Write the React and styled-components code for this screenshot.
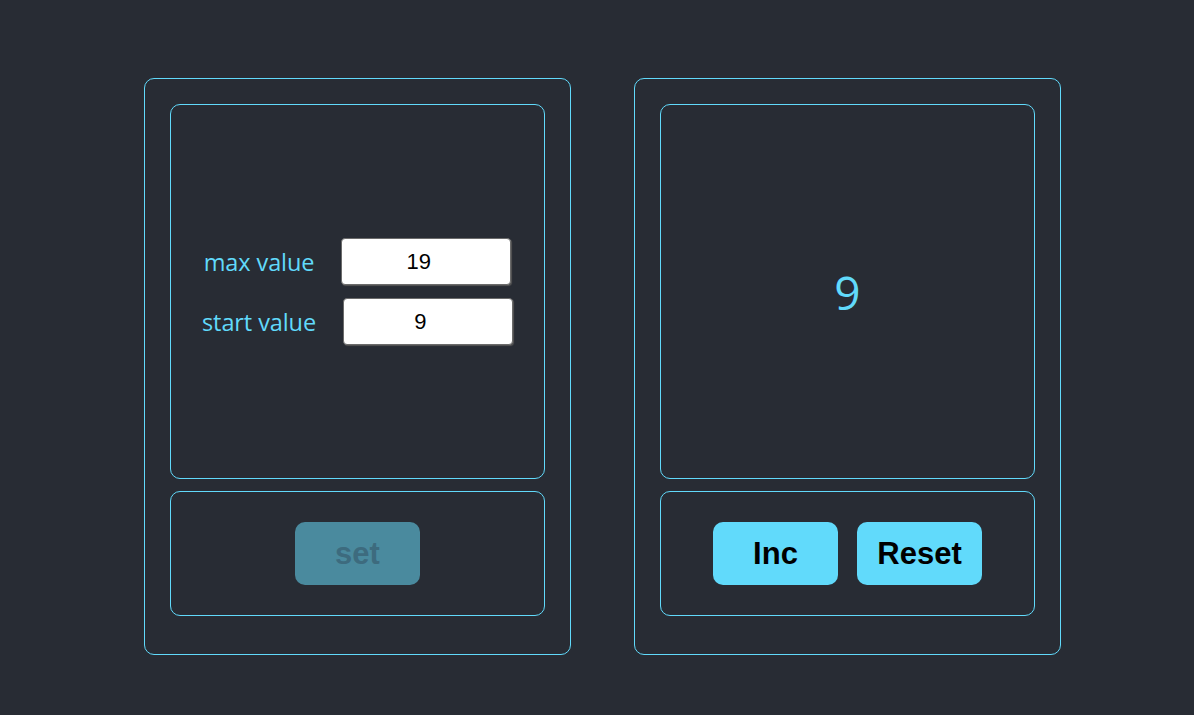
import React from "react";
import styled, { createGlobalStyle } from "styled-components";

const Global = createGlobalStyle`
  html, body { margin: 0; padding: 0; background: #282c34; }
  body { font-family: "Open Sans", "Noto Sans", sans-serif; }
`;

const Page = styled.div`
  min-height: 715px;
  box-sizing: border-box;
  padding: 78px 0 0 144px;
  display: flex;
  gap: 63px;
  align-items: flex-start;
`;

const Card = styled.div`
  box-sizing: border-box;
  width: 427px;
  height: 577px;
  border: 1px solid #61dafb;
  border-radius: 10px;
  padding: 25px;
  display: flex;
  flex-direction: column;
  gap: 12px;
`;

const Panel = styled.div`
  box-sizing: border-box;
  width: 375px;
  height: ${(p) => p.$h}px;
  border: 1px solid #61dafb;
  border-radius: 10px;
  display: flex;
  flex-direction: ${(p) => (p.$column ? "column" : "row")};
  align-items: center;
  justify-content: center;
  gap: ${(p) => p.$gap || 0}px;
`;

const Row = styled.label`
  display: flex;
  align-items: center;
  gap: 27px;
`;

const Label = styled.span`
  color: #61dafb;
  font-family: "Open Sans", "Noto Sans", sans-serif;
  font-size: 23.5px;
  letter-spacing: -0.1px;
`;

const Input = styled.input`
  box-sizing: border-box;
  width: 170px;
  height: 47px;
  border: 1px solid #6b6b6b;
  border-radius: 4px;
  box-shadow: 1px 1px 1px 0 #555;
  background: #fff;
  color: #000;
  font-family: "Liberation Sans", Arial, sans-serif;
  font-size: 22px;
  text-align: center;
  outline: none;
  padding: 0;
`;

const Counter = styled.div`
  color: #61dafb;
  font-family: "Open Sans", "Noto Sans", sans-serif;
  font-size: 46px;
  line-height: 1;
`;

const Button = styled.button`
  box-sizing: border-box;
  width: 125px;
  height: 63px;
  border: none;
  border-radius: 10px;
  background: ${(p) => (p.disabled ? "#4a8a9e" : "#61dafb")};
  color: ${(p) => (p.disabled ? "#3d6b7e" : "#000")};
  font-family: "Liberation Sans", Arial, sans-serif;
  font-weight: bold;
  font-size: 31px;
  cursor: ${(p) => (p.disabled ? "default" : "pointer")};
  padding: 0;
`;

export default function App() {
  return (
    <>
      <Global />
      <Page>
        <Card>
          <Panel $h={375} $column $gap={13}>
            <Row>
              <Label>max value</Label>
              <Input type="number" defaultValue={19} />
            </Row>
            <Row>
              <Label>start value</Label>
              <Input type="number" defaultValue={9} />
            </Row>
          </Panel>
          <Panel $h={125}>
            <Button disabled>set</Button>
          </Panel>
        </Card>
        <Card>
          <Panel $h={375}>
            <Counter>9</Counter>
          </Panel>
          <Panel $h={125} $gap={19}>
            <Button>Inc</Button>
            <Button>Reset</Button>
          </Panel>
        </Card>
      </Page>
    </>
  );
}
